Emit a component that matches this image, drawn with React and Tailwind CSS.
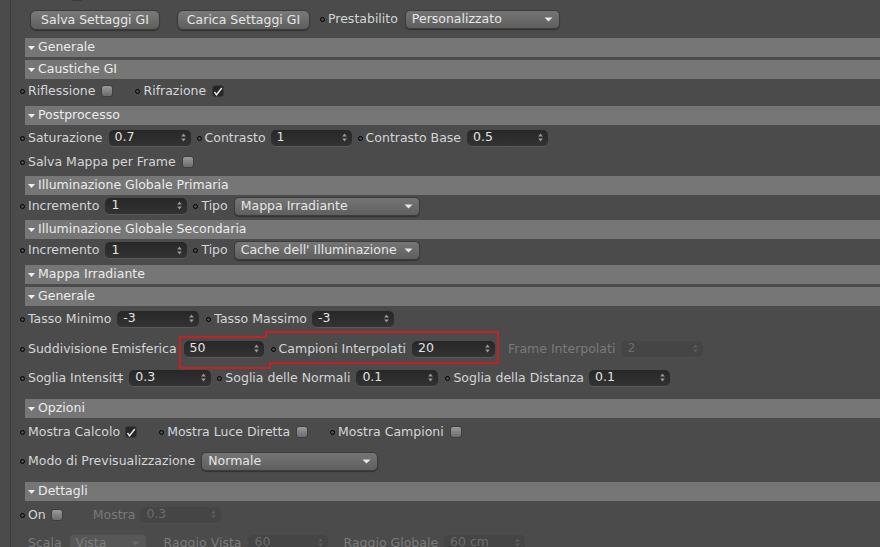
import React from "react";

const FONT = { fontFamily: '"DejaVu Sans", Verdana, sans-serif' };

function Dot() {
  return <span className="w-[5px] h-[5px] rounded-full border border-black shrink-0 mr-[3px]" />;
}

function Spinner({ disabled }) {
  const c = disabled ? "#5e5e5e" : "#9a9a9a";
  return (
    <svg width="5" height="9" viewBox="0 0 5 9" className="shrink-0">
      <path d="M2.5 0.5 L4.8 3.5 H0.2 Z" fill={c} />
      <path d="M2.5 8.5 L4.8 5.5 H0.2 Z" fill={c} />
    </svg>
  );
}

function NumField({ value, w, disabled }) {
  return (
    <div
      className={`h-[17px] rounded-[5px] flex items-center justify-between pl-[6px] pr-[5px] shrink-0 border-b ${
        disabled
          ? "bg-[#454545] text-[#6c6c6c] border-[#505050]"
          : "bg-gradient-to-b from-[#272727] to-[#333333] text-[#e2e2e2] border-[#5a5a5a]"
      }`}
      style={{ width: w }}
    >
      <span className="leading-none">{value}</span>
      <Spinner disabled={disabled} />
    </div>
  );
}

function Arrow({ disabled }) {
  return (
    <svg width="9" height="5" viewBox="0 0 9 5" className="shrink-0">
      <path d="M0.5 0.5 H8.5 L4.5 4.5 Z" fill={disabled ? "#6a6a6a" : "#e8e8e8"} />
    </svg>
  );
}

function Dropdown({ value, w, disabled }) {
  return (
    <div
      className={`h-[19px] rounded-[5px] flex items-center justify-between pl-[6px] pr-[6px] shrink-0 border ${
        disabled
          ? "bg-[#575757] text-[#7b7b7b] border-[#4e4e4e]"
          : "bg-gradient-to-b from-[#757575] to-[#5f5f5f] text-[#e6e6e6] border-[#3c3c3c] shadow-[0_1px_1px_rgba(0,0,0,0.35)]"
      }`}
      style={{ width: w }}
    >
      <span className="leading-none whitespace-nowrap">{value}</span>
      <Arrow disabled={disabled} />
    </div>
  );
}

function Check({ checked }) {
  if (checked) {
    return (
      <span className="w-[12px] h-[12px] rounded-[3px] bg-[#262626] border border-[#3a3a3a] flex items-center justify-center shrink-0">
        <svg width="10" height="9" viewBox="0 0 10 9">
          <path d="M1.5 5 L3.5 7.8 L8.8 1" stroke="#ededed" strokeWidth="1.4" fill="none" />
        </svg>
      </span>
    );
  }
  return (
    <span className="block w-[12px] h-[12px] rounded-[3px] bg-gradient-to-b from-[#9a9a9a] to-[#6c6c6c] border border-[#3e3e3e] shrink-0" />
  );
}

function Label({ children, disabled }) {
  return (
    <span className={`whitespace-nowrap ${disabled ? "text-[#7a7a7a]" : "text-[#d4d6d8]"}`}>{children}</span>
  );
}

function Header({ title }) {
  return (
    <div className="mt-[3px] ml-[14px] h-[19px] bg-[#767676] flex items-center pl-[3px] text-[#ececec]">
      <svg width="7" height="4" viewBox="0 0 7 4" className="mr-[3px] mt-[1px]">
        <path d="M0 0 H7 L3.5 4 Z" fill="#efefef" />
      </svg>
      <span>{title}</span>
    </div>
  );
}

function Row({ h, pb, children }) {
  return (
    <div className="flex items-center pl-[9px] box-border" style={{ height: h, paddingBottom: pb || 0 }}>
      {children}
    </div>
  );
}

function Slot({ ml, children }) {
  return (
    <span className="flex items-center shrink-0" style={{ marginLeft: ml }}>
      {children}
    </span>
  );
}

export default function App() {
  return (
    <div className="w-[880px] h-[547px] overflow-hidden bg-[#4b4b4b] relative text-[12.5px]" style={FONT}>
      <div className="ml-[10px] border-l border-[#3c3c3c] min-h-full">
        <div className="-mt-[14px] h-[18px] flex items-center pl-[19px] gap-[6px]">
          <Label>GI On</Label>
          <span className="block w-[12px] h-[12px] rounded-[3px] bg-[#2b2b2b] border border-[#3a3a3a]" />
        </div>
        <div className="h-[31px] flex items-center pl-[19px]">
          <button className="w-[130px] h-[20px] rounded-[6px] bg-gradient-to-b from-[#7a7a7a] to-[#5e5e5e] border border-[#3a3a3a] text-[#e6e6e6] shadow-[0_1px_1px_rgba(0,0,0,0.35)] whitespace-nowrap">
            Salva Settaggi GI
          </button>
          <button className="ml-[17px] w-[133px] h-[20px] rounded-[6px] bg-gradient-to-b from-[#7a7a7a] to-[#5e5e5e] border border-[#3a3a3a] text-[#e6e6e6] shadow-[0_1px_1px_rgba(0,0,0,0.35)] whitespace-nowrap">
            Carica Settaggi GI
          </button>
          <Slot ml={10}>
            <Dot />
            <Label>Prestabilito</Label>
          </Slot>
          <Slot ml={7}>
            <Dropdown value="Personalizzato" w={155} />
          </Slot>
        </div>

        <Header title="Generale" />
        <Header title="Caustiche GI" />
        <Row h={24}>
          <Dot />
          <Label>Riflessione</Label>
          <Slot ml={6}><Check /></Slot>
          <Slot ml={22}><Dot /><Label>Rifrazione</Label></Slot>
          <Slot ml={6}><Check checked /></Slot>
        </Row>

        <Header title="Postprocesso" />
        <Row h={26}>
          <Dot />
          <Label>Saturazione</Label>
          <Slot ml={6}><NumField value="0.7" w={82} /></Slot>
          <Slot ml={6}><Dot /><Label>Contrasto</Label></Slot>
          <Slot ml={5}><NumField value="1" w={81} /></Slot>
          <Slot ml={6}><Dot /><Label>Contrasto Base</Label></Slot>
          <Slot ml={6}><NumField value="0.5" w={81} /></Slot>
        </Row>
        <Row h={22}>
          <Dot />
          <Label>Salva Mappa per Frame</Label>
          <Slot ml={6}><Check /></Slot>
        </Row>

        <Header title="Illuminazione Globale Primaria" />
        <Row h={22}>
          <Dot />
          <Label>Incremento</Label>
          <Slot ml={6}><NumField value="1" w={82} /></Slot>
          <Slot ml={6}><Dot /><Label>Tipo</Label></Slot>
          <Slot ml={6}><Dropdown value="Mappa Irradiante" w={186} /></Slot>
        </Row>

        <Header title="Illuminazione Globale Secondaria" />
        <Row h={23}>
          <Dot />
          <Label>Incremento</Label>
          <Slot ml={6}><NumField value="1" w={82} /></Slot>
          <Slot ml={6}><Dot /><Label>Tipo</Label></Slot>
          <Slot ml={6}><Dropdown value="Cache dell' Illuminazione" w={186} /></Slot>
        </Row>

        <Header title="Mappa Irradiante" />
        <Header title="Generale" />
        <Row h={26}>
          <Dot />
          <Label>Tasso Minimo</Label>
          <Slot ml={6}><NumField value="-3" w={82} /></Slot>
          <Slot ml={7}><Dot /><Label>Tasso Massimo</Label></Slot>
          <Slot ml={5}><NumField value="-3" w={82} /></Slot>
        </Row>
        <Row h={34}>
          <Dot />
          <Label>Suddivisione Emisferica</Label>
          <Slot ml={7}><NumField value="50" w={80} /></Slot>
          <Slot ml={7}><Dot /><Label>Campioni Interpolati</Label></Slot>
          <Slot ml={6}><NumField value="20" w={83} /></Slot>
          <Slot ml={13}><Label disabled>Frame Interpolati</Label></Slot>
          <Slot ml={6}><NumField value="2" w={82} disabled /></Slot>
        </Row>
        <Row h={30} pb={6}>
          <Dot />
          <Label>Soglia Intensit‡</Label>
          <Slot ml={6}><NumField value="0.3" w={82} /></Slot>
          <Slot ml={6}><Dot /><Label>Soglia delle Normali</Label></Slot>
          <Slot ml={6}><NumField value="0.1" w={82} /></Slot>
          <Slot ml={7}><Dot /><Label>Soglia della Distanza</Label></Slot>
          <Slot ml={5}><NumField value="0.1" w={81} /></Slot>
        </Row>

        <Header title="Opzioni" />
        <Row h={28}>
          <Dot />
          <Label>Mostra Calcolo</Label>
          <Slot ml={5}><Check checked /></Slot>
          <Slot ml={22}><Dot /><Label>Mostra Luce Diretta</Label></Slot>
          <Slot ml={6}><Check /></Slot>
          <Slot ml={22}><Dot /><Label>Mostra Campioni</Label></Slot>
          <Slot ml={6}><Check /></Slot>
        </Row>
        <Row h={33} pb={3}>
          <Dot />
          <Label>Modo di Previsualizzazione</Label>
          <Slot ml={6}><Dropdown value="Normale" w={177} /></Slot>
        </Row>

        <Header title="Dettagli" />
        <Row h={28}>
          <Dot />
          <Label>On</Label>
          <Slot ml={5}><Check /></Slot>
          <Slot ml={30}><Label disabled>Mostra</Label></Slot>
          <Slot ml={5}><NumField value="0.3" w={81} disabled /></Slot>
        </Row>
        <Row h={28}>
          <Slot ml={8}><Label disabled>Scala</Label></Slot>
          <Slot ml={7}><Dropdown value="Vista" w={78} disabled /></Slot>
          <Slot ml={17}><Label disabled>Raggio Vista</Label></Slot>
          <Slot ml={7}><NumField value="60" w={80} disabled /></Slot>
          <Slot ml={15}><Label disabled>Raggio Globale</Label></Slot>
          <Slot ml={6}><NumField value="60 cm" w={81} disabled /></Slot>
        </Row>
      </div>

      <svg className="absolute left-0 top-0 pointer-events-none" width="880" height="547">
        <path
          d="M180 337 H266 V332 H498 V363 H270 V368 H180 Z"
          fill="none"
          stroke="#e8161a"
          strokeWidth="1.5"
        />
      </svg>
    </div>
  );
}
